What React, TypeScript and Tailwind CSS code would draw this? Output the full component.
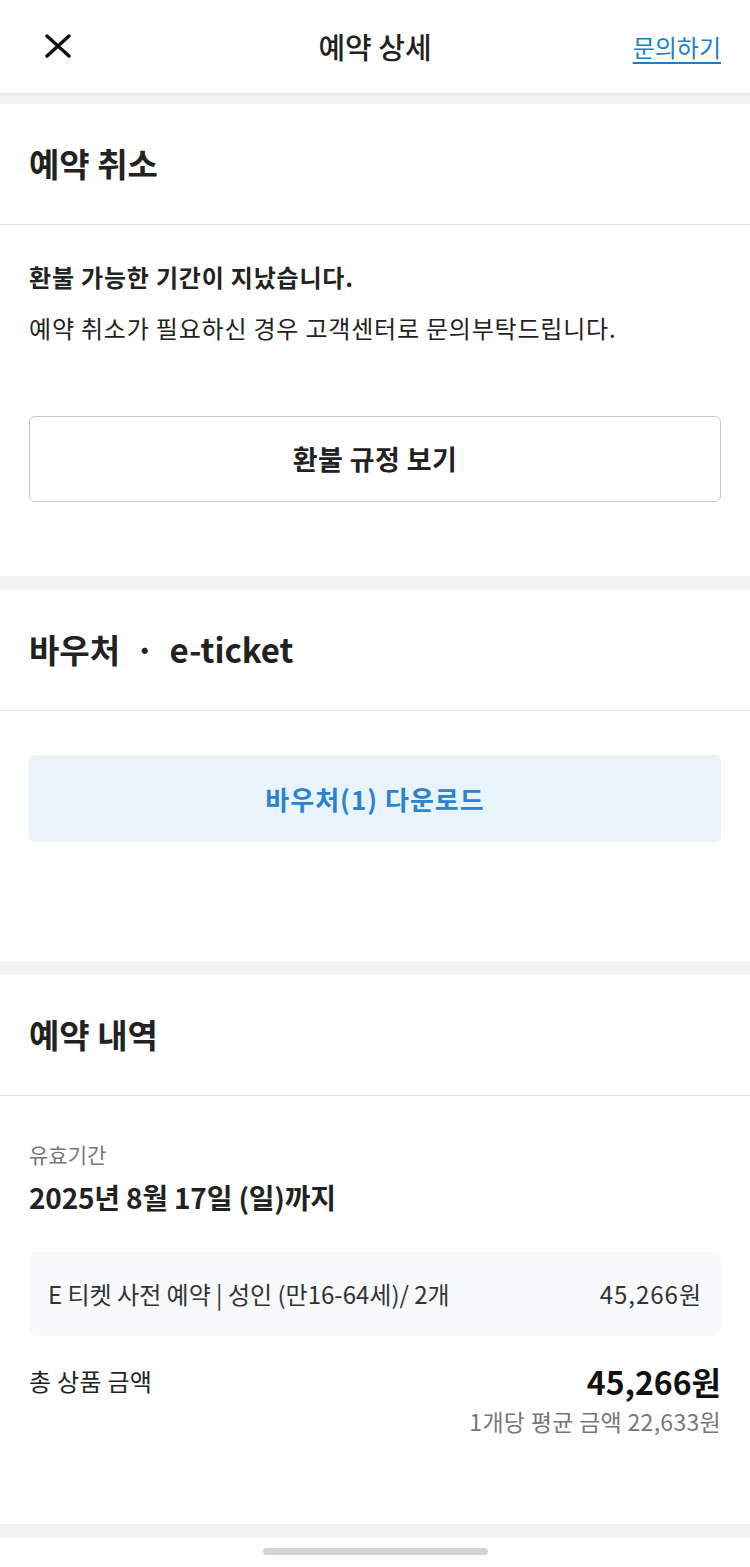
import React from 'react';

const font = { fontFamily: '"Noto Sans CJK KR", "Noto Sans", sans-serif' };

const Band = () => <div className="h-[14px] bg-[#f3f3f4]" />;

const SectionTitle = ({ children }: { children: React.ReactNode }) => (
  <div className="h-[121px] flex items-center px-[29px] border-b border-[#e2e2e2]">
    <h2 className="text-[33px] font-bold text-[#222]">{children}</h2>
  </div>
);

const App: React.FC = () => {
  return (
    <div className="w-[750px] min-h-[1567px] bg-white" style={font}>
      {/* header */}
      <header className="h-[94px] flex items-center justify-between px-[29px] border-b border-[#e4e4e4] shadow-[0_1px_3px_rgba(0,0,0,0.06)] relative">
        <svg width="26" height="24" viewBox="0 0 26 24" className="ml-[16px] -mt-[2px]">
          <path d="M2 2 L24 22 M24 2 L2 22" stroke="#111" strokeWidth="3.4" strokeLinecap="round" />
        </svg>
        <h1 className="absolute left-1/2 -translate-x-1/2 text-[29px] font-medium text-[#222]">예약 상세</h1>
        <a className="text-[24px] text-[#1a7fcb] underline underline-offset-[5px] decoration-[1.5px]">문의하기</a>
      </header>
      <div className="h-[10px] bg-[#f3f3f4]" />

      {/* cancel */}
      <section>
        <SectionTitle>예약 취소</SectionTitle>
        <div className="px-[29px] pt-[36px] pb-[74px]">
          <p className="text-[24px] leading-[32px] font-bold text-[#222] tracking-[0.8px]">환불 가능한 기간이 지났습니다.</p>
          <p className="mt-[19px] text-[24px] leading-[32px] text-[#222] tracking-[0.8px]">예약 취소가 필요하신 경우 고객센터로 문의부탁드립니다.</p>
          <button className="mt-[72px] w-full h-[86px] border border-[#c8c8c8] rounded-[6px] text-[27px] font-bold text-[#222] tracking-[0.4px]">환불 규정 보기</button>
        </div>
      </section>
      <Band />

      {/* voucher */}
      <section>
        <SectionTitle>바우처 &nbsp;·&nbsp; e-ticket</SectionTitle>
        <div className="px-[29px] pt-[44px] pb-[119px]">
          <button className="w-full h-[87px] bg-[#e8f3fc] rounded-[6px] text-[26px] font-bold text-[#2a83cc] tracking-[1px]">바우처(1) 다운로드</button>
        </div>
      </section>
      <Band />

      {/* booking */}
      <section>
        <SectionTitle>예약 내역</SectionTitle>
        <div className="px-[29px] pt-[43px] pb-[88px]">
          <p className="text-[21px] leading-[30px] text-[#777]">유효기간</p>
          <p className="mt-[9px] text-[28px] leading-[38px] font-bold text-[#222] tracking-[-0.2px]">2025년 8월 17일 (일)까지</p>
          <div className="mt-[36px] h-[84px] bg-[#f8f9fa] rounded-[8px] flex items-center justify-between px-[19px] text-[24px] text-[#333]">
            <span>E 티켓 사전 예약 | 성인 (만16-64세)/ 2개</span>
            <span className="tracking-[1px]">45,266원</span>
          </div>
          <div className="mt-[25px] h-[40px] flex items-center justify-between">
            <span className="text-[24px] text-[#222] tracking-[0.3px]">총 상품 금액</span>
            <span className="text-[32px] font-bold text-[#111]">45,266원</span>
          </div>
          <p className="mt-[5px] text-right text-[23px] leading-[30px] text-[#777] tracking-[0.3px]">1개당 평균 금액 22,633원</p>
        </div>
      </section>
      <Band />
      <div className="h-[26px] flex items-center justify-center">
        <div className="w-[225px] h-[7px] rounded-full bg-[#d4d4d4]" />
      </div>
    </div>
  );
};

export default App;
